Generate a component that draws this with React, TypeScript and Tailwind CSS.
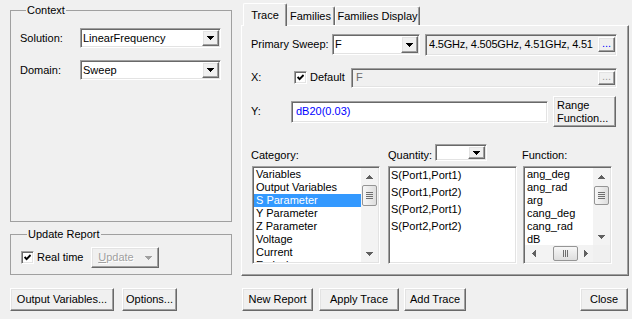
import type { ReactNode } from "react";

// classic 3d edges
const raised =
  "border border-t-white border-l-white border-r-[#696969] border-b-[#696969] shadow-[inset_-1px_-1px_0_#a0a0a0,inset_1px_1px_0_#e3e3e3] bg-[#f0f0f0]";
const sunken =
  "border border-t-[#a0a0a0] border-l-[#a0a0a0] border-r-white border-b-white shadow-[inset_1px_1px_0_#696969,inset_-1px_-1px_0_#e3e3e3]";

function Down({ color = "#000" }: { color?: string }) {
  return (
    <svg width="7" height="4" viewBox="0 0 7 4" shapeRendering="crispEdges">
      <path d="M0 0h7v1h-1v1h-1v1h-1v1h-1v-1h-1v-1h-1v-1h-1z" fill={color} />
    </svg>
  );
}

function Up({ color = "#606060" }: { color?: string }) {
  return (
    <svg width="7" height="4" viewBox="0 0 7 4" shapeRendering="crispEdges">
      <path d="M3 0h1v1h1v1h1v1h1v1H0V3h1V2h1V1h1z" fill={color} />
    </svg>
  );
}

function Side({ dir }: { dir: "l" | "r" }) {
  return (
    <svg width="4" height="7" viewBox="0 0 4 7" shapeRendering="crispEdges">
      {dir === "l" ? (
        <path d="M0 3h1V2h1V1h1V0h1v7H3V6H2V5H1V4H0z" fill="#606060" />
      ) : (
        <path d="M0 0h1v1h1v1h1v1h1v1H3v1H2v1H1v1H0z" fill="#606060" />
      )}
    </svg>
  );
}

function Btn({ className = "", children }: { className?: string; children: ReactNode }) {
  return (
    <div className={`${raised} flex items-center justify-center whitespace-nowrap ${className}`}>
      {children}
    </div>
  );
}

function Combo({ value, className }: { value: string; className: string }) {
  return (
    <div className={`${sunken} bg-white flex items-stretch p-[1px] ${className}`}>
      <span className="flex-1 pl-[1px] flex items-center whitespace-nowrap overflow-hidden">{value}</span>
      <div className={`${raised} w-[17px] flex items-center justify-center`}>
        <Down />
      </div>
    </div>
  );
}

function Check() {
  return (
    <div className={`${sunken} bg-white w-[13px] h-[13px] shrink-0 flex items-center justify-center`}>
      <svg width="7" height="7" viewBox="0 0 7 7">
        <polyline points="0.6,3 2.6,5.2 6.6,1" fill="none" stroke="#000" strokeWidth="1.9" />
      </svg>
    </div>
  );
}

function VScroll({ thumb }: { thumb: string }) {
  return (
    <div className="w-[17px] h-full bg-[#f3f3f3] flex flex-col shrink-0">
      <div className="h-[17px] flex items-center justify-center">
        <Up />
      </div>
      <div className="flex-1 flex flex-col">
        <div
          className={`mx-[1px] rounded-[2px] border border-[#959595] bg-linear-to-r from-[#f7f7f7] to-[#dedede] flex flex-col items-center justify-center gap-[1px] ${thumb}`}
        >
          <div className="w-[7px] h-px bg-[#6f6f6f]" />
          <div className="w-[7px] h-px bg-[#6f6f6f]" />
          <div className="w-[7px] h-px bg-[#6f6f6f]" />
          <div className="w-[7px] h-px bg-[#6f6f6f]" />
        </div>
      </div>
      <div className="h-[17px] flex items-center justify-center">
        <Down color="#606060" />
      </div>
    </div>
  );
}

const categories = [
  "Variables",
  "Output Variables",
  "S Parameter",
  "Y Parameter",
  "Z Parameter",
  "Voltage",
  "Current",
  "Emission",
];
const quantities = ["S(Port1,Port1)", "S(Port1,Port2)", "S(Port2,Port1)", "S(Port2,Port2)"];
const functions = ["ang_deg", "ang_rad", "arg", "cang_deg", "cang_rad", "dB"];

export default function App() {
  return (
    <div className="w-[632px] h-[319px] bg-[#f0f0f0] flex font-['Tahoma','Liberation_Sans',sans-serif] text-[11px] leading-[13px] text-black overflow-hidden select-none">
      {/* left side */}
      <div className="ml-[10px] w-[222px] pt-[4px] flex flex-col">
        <fieldset className="h-[218px] border border-[#a0a0a0] px-[9px]">
          <legend className="ml-[6px] px-[1px]">Context</legend>
          <div className="mt-[11px] flex items-center h-[20px]">
            <span className="w-[60px]">Solution:</span>
            <Combo value="LinearFrequency" className="w-[141px] h-[20px]" />
          </div>
          <div className="mt-[12px] flex items-center h-[20px]">
            <span className="w-[60px]">Domain:</span>
            <Combo value="Sweep" className="w-[141px] h-[20px]" />
          </div>
        </fieldset>

        <fieldset className="mt-[6px] h-[47px] border border-[#a0a0a0] px-[10px]">
          <legend className="ml-[6px] px-[1px]">Update Report</legend>
          <div className="mt-[6px] flex items-center h-[21px]">
            <Check />
            <span className="ml-[3px] w-[54px]">Real time</span>
            <Btn className="w-[68px] h-[21px] gap-[11px] text-[#a0a0a0]">
              <span className="[text-shadow:1px_1px_0_#fff]">
                <u>U</u>pdate
              </span>
              <Down color="#a0a0a0" />
            </Btn>
          </div>
        </fieldset>

        <div className="mt-[13px] flex gap-[8px]">
          <Btn className="w-[104px] h-[23px]">Output Variables...</Btn>
          <Btn className="w-[55px] h-[23px]">Options...</Btn>
        </div>
      </div>

      {/* right side */}
      <div className="ml-[9px] w-[388px] pt-[3px] flex flex-col">
        <div className="relative z-10 flex items-end h-[22px] pl-[2px]">
          <div className="h-[23px] -mb-px w-[44px] bg-[#f0f0f0] border-t border-l border-r border-t-white border-l-white border-r-[#696969] shadow-[inset_-1px_0_0_#a0a0a0] rounded-t-[2px] flex justify-center pt-[5px]">
            Trace
          </div>
          <div className="h-[19px] w-[48px] border-t border-r border-t-white border-r-[#696969] shadow-[inset_-1px_0_0_#a0a0a0] rounded-t-[2px] flex justify-center pt-[3px]">
            Families
          </div>
          <div className="h-[19px] w-[85px] border-t border-l border-r border-t-white border-l-white border-r-[#696969] shadow-[inset_-1px_0_0_#a0a0a0] rounded-t-[2px] flex justify-center pt-[3px]">
            Families Display
          </div>
        </div>

        <div className="h-[251px] border border-t-white border-l-white border-r-[#696969] border-b-[#696969] shadow-[inset_-1px_-1px_0_#a0a0a0] pt-[7px] pl-[9px] flex flex-col">
          {/* primary sweep */}
          <div className="flex items-center h-[23px]">
            <span className="w-[81px]">Primary Sweep:</span>
            <Combo value="F" className="w-[88px] h-[21px]" />
            <div className={`${sunken} ml-[5px] w-[192px] h-[22px] flex items-center pl-[3px] pr-[1px]`}>
              <span className="flex-1 overflow-hidden whitespace-nowrap tracking-[-0.2px]">4.5GHz, 4.505GHz, 4.51GHz, 4.51</span>
              <Btn className="w-[17px] h-[15px] text-[#0000ff] items-end pb-[1px]">...</Btn>
            </div>
          </div>

          {/* X */}
          <div className="mt-[11px] flex items-center h-[21px]">
            <span className="w-[43px]">X:</span>
            <Check />
            <span className="ml-[3px] w-[41px]">Default</span>
            <div className={`${sunken} w-[266px] h-[20px] flex items-center pl-[4px] pr-[1px] text-[#6d6d6d]`}>
              <span className="flex-1">F</span>
              <Btn className="w-[17px] h-[14px] text-[#a0a0a0] items-end pb-[1px]">...</Btn>
            </div>
          </div>

          {/* Y */}
          <div className="mt-[8px] flex items-center h-[31px]">
            <span className="w-[40px]">Y:</span>
            <div className={`${sunken} bg-white w-[257px] h-[22px] flex items-center pl-[4px] text-[#0000ff]`}>
              dB20(0.03)
            </div>
            <Btn className="ml-[5px] w-[63px] h-[31px] flex-col !items-start pl-[3px]">
              <span>Range</span>
              <span>Function...</span>
            </Btn>
          </div>

          {/* list headers */}
          <div className="mt-[17px] flex items-end h-[18px]">
            <span className="w-[137px]">Category:</span>
            <span className="w-[47px]">Quantity:</span>
            <Combo value="" className="w-[52px] h-[17px] mb-px" />
            <span className="ml-[35px]">Function:</span>
          </div>

          {/* lists */}
          <div className="mt-[4px] flex h-[98px]">
            <div className={`${sunken} bg-white ml-[1px] w-[128px] p-px flex`}>
              <div className="flex-1 overflow-hidden">
                {categories.map((c) => (
                  <div
                    key={c}
                    className={`h-[13px] pl-[2px] whitespace-nowrap ${
                      c === "S Parameter" ? "bg-[#3399ff] text-white" : ""
                    }`}
                  >
                    {c}
                  </div>
                ))}
              </div>
              <VScroll thumb="h-[21px]" />
            </div>

            <div className={`${sunken} bg-white ml-[8px] w-[129px] p-px pl-[2px] overflow-hidden`}>
              {quantities.map((q) => (
                <div key={q} className="h-[17px] leading-[15px] whitespace-nowrap">
                  {q}
                </div>
              ))}
            </div>

            <div className={`${sunken} bg-white ml-[6px] w-[89px] p-px flex flex-col`}>
              <div className="flex flex-1 min-h-0">
                <div className="flex-1 overflow-hidden pl-[2px]">
                  {functions.map((f) => (
                    <div key={f} className="h-[13px] whitespace-nowrap">
                      {f}
                    </div>
                  ))}
                </div>
                <VScroll thumb="mt-px h-[19px]" />
              </div>
              <div className="flex h-[17px] shrink-0">
                <div className="flex-1 bg-[#f3f3f3] flex items-center">
                  <div className="w-[17px] flex justify-center">
                    <Side dir="l" />
                  </div>
                  <div className="ml-[11px] w-[25px] h-[15px] rounded-[2px] border border-[#959595] bg-linear-to-b from-[#f7f7f7] to-[#dedede] flex items-center justify-center gap-[1px]">
                    <div className="w-px h-[7px] bg-[#6f6f6f]" />
                    <div className="w-px h-[7px] bg-[#6f6f6f]" />
                    <div className="w-px h-[7px] bg-[#6f6f6f]" />
                  </div>
                  <div className="flex-1 flex justify-center">
                    <Side dir="r" />
                  </div>
                </div>
                <div className="w-[17px] bg-[#f0f0f0]" />
              </div>
            </div>
          </div>
        </div>

        <div className="mt-[12px] flex">
          <Btn className="ml-px w-[71px] h-[23px]">New Report</Btn>
          <Btn className="ml-[6px] w-[80px] h-[23px]">Apply Trace</Btn>
          <Btn className="ml-[5px] w-[62px] h-[23px]">Add Trace</Btn>
          <Btn className="ml-auto mr-px w-[48px] h-[23px]">Close</Btn>
        </div>
      </div>
    </div>
  );
}
